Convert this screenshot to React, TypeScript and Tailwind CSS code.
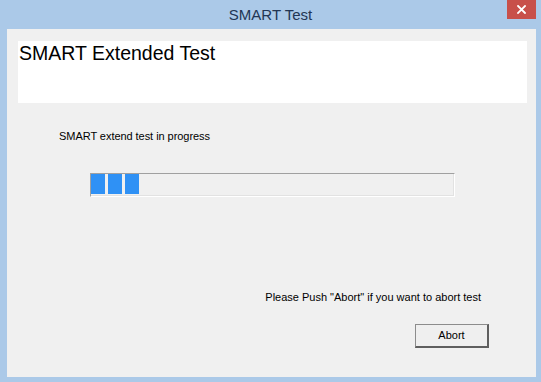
import React from 'react';

const font = { fontFamily: '"Liberation Sans", Arial, sans-serif' };

const App: React.FC = () => {
  const blocks = [0, 1, 2];

  return (
    <div className="w-[541px] h-[382px] bg-[#abc9e8] flex flex-col overflow-hidden" style={font}>
      {/* Title bar */}
      <div className="relative h-[29px] flex items-center justify-center">
        <span className="text-[15px] leading-none text-[#223654] pb-[1px]">SMART Test</span>
        <button className="absolute top-0 right-[5px] w-[29px] h-[19px] bg-[#c8504a] flex items-center justify-center">
          <svg width="9" height="9" viewBox="0 0 9 9">
            <path d="M1 1L8 8M8 1L1 8" stroke="#ffffff" strokeWidth="1.8" strokeLinecap="square" />
          </svg>
        </button>
      </div>

      {/* Client area */}
      <div className="ml-[7px] mr-[5px] h-[348px] bg-[#f0f0f0] flex flex-col">
        {/* Header panel */}
        <div className="ml-[11px] mr-[9px] mt-[12px] h-[62px] bg-white pt-[2px] pl-[1px]">
          <h1 className="text-[19.5px] leading-[20px] text-black">SMART Extended Test</h1>
        </div>

        <p className="ml-[52px] mt-[27px] text-[11px] leading-[13px] tracking-[-0.05px] text-black">
          SMART extend test in progress
        </p>

        {/* Progress bar */}
        <div className="ml-[83px] mt-[30px] w-[365px] h-[24px] border border-t-[#a0a0a0] border-l-[#a0a0a0] border-b-white border-r-white">
          <div className="h-full border-r border-b border-[#e2e2e2] flex gap-[3px] pb-[1px]">
            {blocks.map((b) => (
              <div key={b} className="w-[14px] h-full bg-[#2f91f5]" />
            ))}
          </div>
        </div>

        <p className="mt-[94px] text-right mr-[55px] text-[11px] leading-[13px] text-black">
          Please Push "Abort" if you want to abort test
        </p>

        <div className="flex justify-end mr-[47px] mt-[20px]">
          <button className="w-[74px] h-[24px] bg-[#efefef] border border-[#8c8c8c] border-b-2 border-r-2 border-b-[#5f5f5f] border-r-[#5f5f5f] text-[11px] text-black leading-none">
            Abort
          </button>
        </div>
      </div>
    </div>
  );
};

export default App;
